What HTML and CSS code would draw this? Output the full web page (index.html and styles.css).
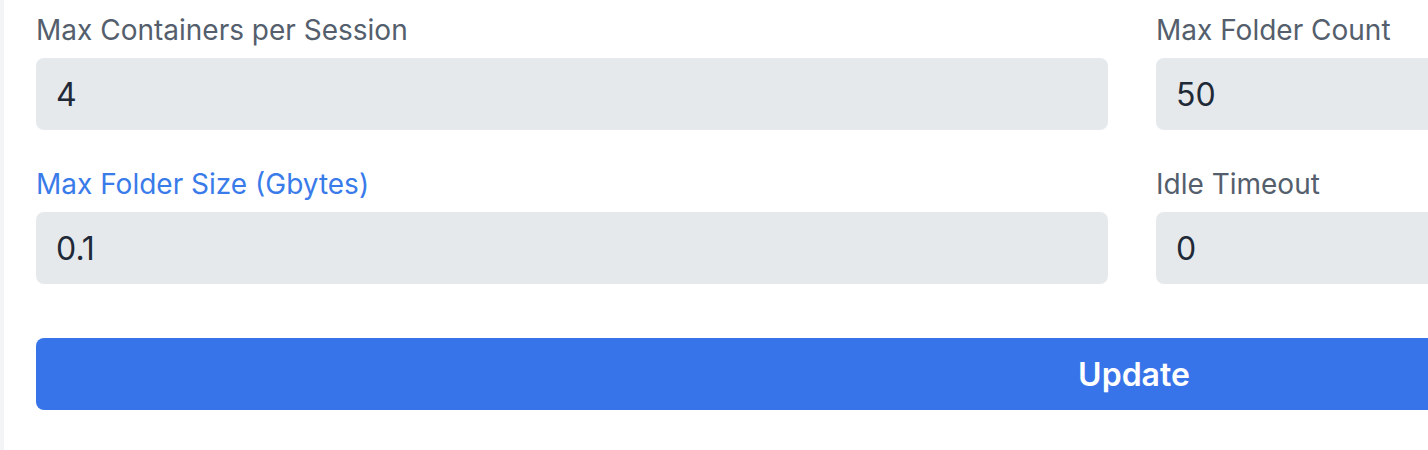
FILE: index.html
```html
<!DOCTYPE html>
<html lang="en">
<head>
  <meta charset="UTF-8" />
  <meta name="viewport" content="width=device-width, initial-scale=1.0" />
  <title>Session Settings</title>
  <link rel="stylesheet" href="styles.css">
</head>
<body>
  <div class="card">
    <form class="settings">
      <div class="grid">
        <div class="field">
          <label for="max-containers">Max Containers per Session</label>
          <input type="text" id="max-containers" value="4" />
        </div>
        <div class="field">
          <label for="max-folders">Max Folder Count</label>
          <input type="text" id="max-folders" value="50" />
        </div>
        <div class="field">
          <label for="folder-size" class="active">Max Folder Size (Gbytes)</label>
          <input type="text" id="folder-size" value="0.1" />
        </div>
        <div class="field">
          <label for="idle-timeout">Idle Timeout</label>
          <input type="text" id="idle-timeout" value="0" />
        </div>
      </div>
      <button type="submit">Update</button>
    </form>
  </div>
</body>
</html>
```

FILE: styles.css
```css
* { box-sizing: border-box; }
html, body { overflow: hidden; }
body {
  font-family: Inter, "Noto Sans", sans-serif;
  background: #f3f4f6;
  margin: 0;
  padding-left: 4px;
}
.card {
  background: white;
  width: 2260px;
  min-height: 450px;
  padding: 10px 32px 0;
}
.grid {
  display: grid;
  grid-template-columns: 1072px 1072px;
  column-gap: 48px;
  row-gap: 34px;
}
label {
  display: block;
  font-size: 28px;
  line-height: 40px;
  color: #545e6c;
  margin-bottom: 8px;
}
label.active { color: #3a7bea; }
input {
  display: block;
  width: 100%;
  height: 72px;
  padding: 0 20px;
  border: none;
  border-radius: 8px;
  background: #e6e9ec;
  font-family: inherit;
  font-size: 32px;
  color: #1f2937;
  outline: none;
}
button {
  display: block;
  width: 100%;
  height: 72px;
  margin-top: 54px;
  border: none;
  border-radius: 8px;
  background: #3874e9;
  color: white;
  font-family: inherit;
  font-size: 32px;
  font-weight: 600;
  cursor: pointer;
}
```
